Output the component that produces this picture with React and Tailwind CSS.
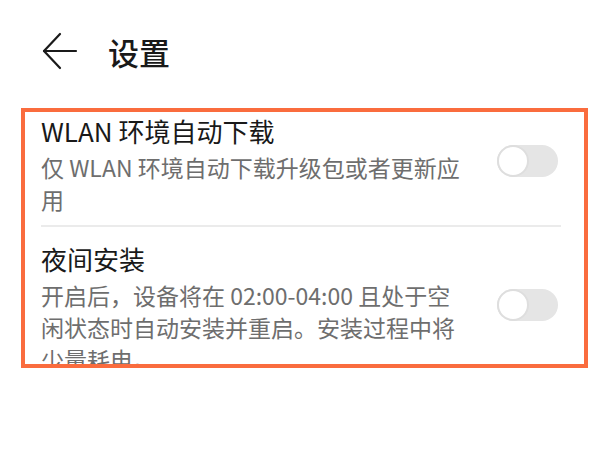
import { useState } from 'react';

const font = { fontFamily: '"Noto Sans CJK SC", "Noto Sans", sans-serif' };

function Toggle({ on, onChange }) {
    return (
        <button
            type="button"
            onClick={() => onChange(!on)}
            className={`relative shrink-0 w-[61px] h-[32px] rounded-full mb-2 mr-[3px] transition-colors ${on ? 'bg-[#007dff]' : 'bg-[#e5e5e5]'}`}
        >
            <span
                className={`absolute top-[0px] w-[32px] h-[32px] rounded-full bg-white border-[2px] border-[#dedede] transition-all ${on ? 'left-[29px]' : 'left-0'}`}
            />
        </button>
    );
}

function SettingRow({ title, desc, on, onChange }) {
    return (
        <div className="flex items-center">
            <div className="flex-1 min-w-0 pr-[28px]">
                <div className="text-[26px] leading-[34px] text-[#191919]">{title}</div>
                <div className="mt-[3px] text-[23px] leading-[32px] text-[#6e6e6e]">{desc}</div>
            </div>
            <Toggle on={on} onChange={onChange} />
        </div>
    );
}

export default function App() {
    const [wlan, setWlan] = useState(false);
    const [night, setNight] = useState(false);

    return (
        <div className="w-[600px] h-[450px] bg-white overflow-hidden" style={font}>
            {/* Header */}
            <div className="flex items-center h-[108px] pl-[42px] pb-[6px]">
                <svg width="36" height="38" viewBox="0 0 36 38" fill="none" stroke="#1a1a1a" strokeWidth="2.2" strokeLinecap="round" strokeLinejoin="round">
                    <path d="M34 19H2" />
                    <path d="M18 2L2 19l16 17" />
                </svg>
                <h1 className="ml-[30px] text-[31px] leading-none font-medium text-[#191919]">设置</h1>
            </div>

            {/* Highlighted update options */}
            <div className="ml-[21px] w-[567px] h-[260px] border-[4px] border-[#fa6c3e] overflow-hidden">
                <div className="pl-[16px] pr-[23px] pt-[2px]">
                    <SettingRow
                        title="WLAN 环境自动下载"
                        desc="仅 WLAN 环境自动下载升级包或者更新应用"
                        on={wlan}
                        onChange={setWlan}
                    />
                    <div className="mt-[10px] h-[2px] bg-[#ebebeb]" />
                    <div className="pt-[15px]">
                        <SettingRow
                            title="夜间安装"
                            desc="开启后，设备将在 02:00-04:00 且处于空闲状态时自动安装并重启。安装过程中将少量耗电。"
                            on={night}
                            onChange={setNight}
                        />
                    </div>
                </div>
            </div>
        </div>
    );
}
